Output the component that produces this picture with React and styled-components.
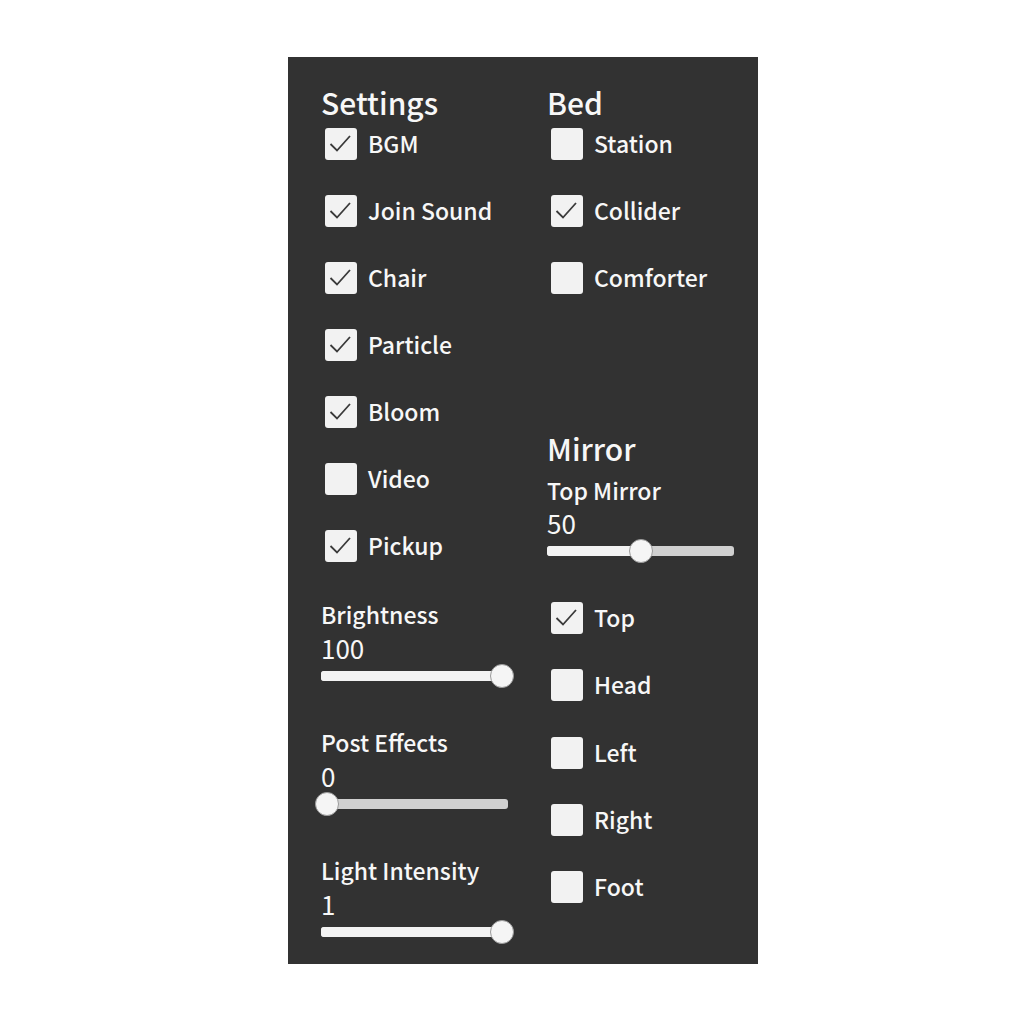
import React from 'react'
import styled, { createGlobalStyle } from 'styled-components'

const Global = createGlobalStyle`
  html, body {
    margin: 0;
    padding: 0;
    background: #ffffff;
  }
  body {
    font-family: "Noto Sans CJK JP", "Noto Sans", sans-serif;
  }
`

const leftChecks = [
  { label: 'BGM', on: true },
  { label: 'Join Sound', on: true },
  { label: 'Chair', on: true },
  { label: 'Particle', on: true },
  { label: 'Bloom', on: true },
  { label: 'Video', on: false },
  { label: 'Pickup', on: true },
]

const bedChecks = [
  { label: 'Station', on: false },
  { label: 'Collider', on: true },
  { label: 'Comforter', on: false },
]

const mirrorChecks = [
  { label: 'Top', on: true },
  { label: 'Head', on: false },
  { label: 'Left', on: false },
  { label: 'Right', on: false },
  { label: 'Foot', on: false },
]

const sliders = [
  { label: 'Brightness', value: '100', pct: 1 },
  { label: 'Post Effects', value: '0', pct: 0 },
  { label: 'Light Intensity', value: '1', pct: 1 },
]

const Check = ({ label, on }) => (
  <CheckRow>
    <Box>
      {on && (
        <svg width="32" height="32" viewBox="0 0 32 32">
          <polyline points="5.5,16 12,22.5 25,8" fill="none" stroke="#3a3a3a" strokeWidth="1.8" />
        </svg>
      )}
    </Box>
    <CheckLabel>{label}</CheckLabel>
  </CheckRow>
)

const Slider = ({ label, value, pct, first }) => (
  <SliderGroup first={first}>
    <SliderLabel>{label}</SliderLabel>
    <SliderValue>{value}</SliderValue>
    <Track>
      <Fill style={{ width: `calc(6px + ${pct} * (100% - 12px))` }} />
      <Thumb style={{ left: `calc(${pct} * (100% - 12px) - 6px)` }} />
    </Track>
  </SliderGroup>
)

const App = () => {
  return (
    <Page>
      <Global />
      <Panel>
        <Column>
          <Title>Settings</Title>
          <CheckList>
            {leftChecks.map((c) => (
              <Check key={c.label} {...c} />
            ))}
          </CheckList>
          {sliders.map((s, i) => (
            <Slider key={s.label} {...s} first={i === 0} />
          ))}
        </Column>
        <Column>
          <Title>Bed</Title>
          <CheckList>
            {bedChecks.map((c) => (
              <Check key={c.label} {...c} />
            ))}
          </CheckList>
          <MirrorTitle>Mirror</MirrorTitle>
          <SubLabel>Top Mirror</SubLabel>
          <SubValue>50</SubValue>
          <Track>
            <Fill style={{ width: 'calc(6px + 0.5 * (100% - 12px))' }} />
            <Thumb style={{ left: 'calc(0.5 * (100% - 12px) - 6px)' }} />
          </Track>
          <MirrorList>
            {mirrorChecks.map((c) => (
              <Check key={c.label} {...c} />
            ))}
          </MirrorList>
        </Column>
      </Panel>
    </Page>
  )
}

export default App

const Page = styled.div`
  width: 1024px;
  height: 1024px;
  padding: 57px 0 0 288px;
  box-sizing: border-box;
`

const Panel = styled.div`
  width: 470px;
  height: 907px;
  background: #323232;
  box-sizing: border-box;
  padding: 27px 0 0 33px;
  display: grid;
  grid-template-columns: 226px 187px;
  align-items: start;
  color: #f7f7f7;
`

const Column = styled.div`
  display: flex;
  flex-direction: column;
`

const Title = styled.div`
  height: 40px;
  line-height: 36px;
  font-size: 30px;
  font-weight: 500;
  margin-bottom: 4px;
`

const MirrorTitle = styled(Title)`
  margin-top: 136px;
  margin-bottom: 6px;
`

const CheckList = styled.div`
  display: flex;
  flex-direction: column;
  gap: 35px;
`

const MirrorList = styled(CheckList)`
  margin-top: 39px;
  gap: 35.25px;
`

const CheckRow = styled.div`
  display: flex;
  align-items: center;
  height: 32px;
  padding-left: 4px;
`

const Box = styled.div`
  width: 32px;
  height: 32px;
  border-radius: 3px;
  background: #f2f2f2;
  flex-shrink: 0;
  display: flex;
`

const CheckLabel = styled.span`
  margin-left: 11px;
  font-size: 23px;
  font-weight: 500;
  line-height: 28px;
  padding-bottom: 2px;
`

const SliderGroup = styled.div`
  display: flex;
  flex-direction: column;
  width: 187px;
  margin-top: ${({ first }) => (first ? '38px' : '40px')};
`

const SliderLabel = styled.div`
  height: 30px;
  line-height: 28px;
  font-size: 23px;
  font-weight: 500;
`

const SliderValue = styled.div`
  height: 30px;
  line-height: 28px;
  margin-top: 4px;
  font-size: 26px;
  font-weight: 400;
`

const SubLabel = styled(SliderLabel)``

const SubValue = styled(SliderValue)`
  margin-top: 3px;
`

const Track = styled.div`
  position: relative;
  height: 24px;
  width: 187px;
  &::before {
    content: '';
    position: absolute;
    left: 0;
    right: 0;
    top: 7px;
    height: 10px;
    border-radius: 3px;
    background: #d0d0d0;
  }
`

const Fill = styled.div`
  position: absolute;
  left: 0;
  top: 7px;
  height: 10px;
  border-radius: 3px;
  background: #f3f3f3;
`

const Thumb = styled.div`
  position: absolute;
  top: 0;
  width: 24px;
  height: 24px;
  box-sizing: border-box;
  border-radius: 50%;
  background: #f5f5f5;
  border: 1px solid #9a9a9a;
`
